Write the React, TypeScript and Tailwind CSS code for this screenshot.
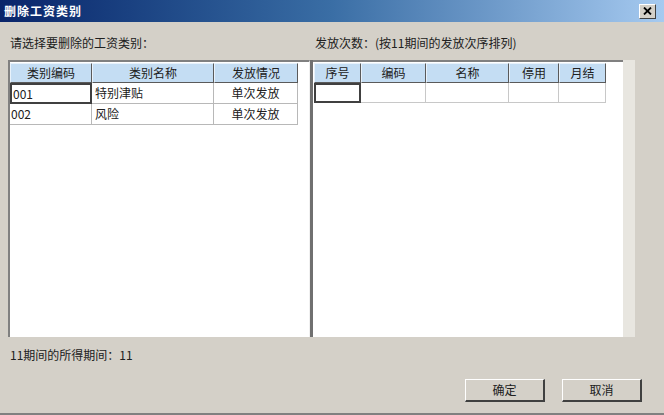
import React from 'react';

const font = { fontFamily: '"Noto Sans CJK SC", "Noto Sans", sans-serif' };

const leftCols = [
  { title: '类别编码', w: 'w-[82px]' },
  { title: '类别名称', w: 'w-[122px]' },
  { title: '发放情况', w: 'w-[84px]' },
];

const leftRows = [
  ['001', '特别津贴', '单次发放'],
  ['002', '风险', '单次发放'],
];

const rightCols = [
  { title: '序号', w: 'w-[47px]' },
  { title: '编码', w: 'w-[65px]' },
  { title: '名称', w: 'w-[83px]' },
  { title: '停用', w: 'w-[50px]' },
  { title: '月结', w: 'w-[47px]' },
];

const HeaderCell: React.FC<{ title: string; w: string }> = ({ title, w }) => (
  <div
    className={`${w} h-[20px] shrink-0 flex items-center justify-center bg-[#c4ddf3] border border-[#5a5a5a] border-l-[#e8f2fb] border-t-[#e8f2fb] text-[12px] text-[#202020]`}
  >
    {title}
  </div>
);

const App: React.FC = () => {
  return (
    <div className="w-[664px] h-[415px] bg-[#d4d0c8] flex flex-col overflow-hidden select-none" style={font}>
      {/* title bar */}
      <div className="h-[22px] shrink-0 flex items-center justify-between pl-[4px] pr-[8px] bg-gradient-to-r from-[#0a246a] via-[#3a6ea5] to-[#a6caf0]">
        <span className="text-white font-bold text-[12px] tracking-[1px]">删除工资类别</span>
        <div className="w-[17px] h-[15px] bg-[#d4d0c8] border border-[#ffffff] border-r-[#404040] border-b-[#404040] flex items-center justify-center">
          <svg width="9" height="8" viewBox="0 0 9 8">
            <path d="M1 0.5 L8 7.5 M8 0.5 L1 7.5" stroke="#000" strokeWidth="1.8" />
          </svg>
        </div>
      </div>

      <div className="flex-1 flex flex-col px-[8px]">
        {/* labels */}
        <div className="h-[38px] flex items-end pb-[8px] text-[12px] text-[#202020]">
          <div className="w-[307px] pl-[2px]">请选择要删除的工资类别：</div>
          <div>发放次数：(按11期间的发放次序排列)</div>
        </div>

        {/* panels */}
        <div className="h-[277px] flex">
          <div className="w-[302px] bg-white border-l-2 border-t-2 border-[#808080] border-r border-r-[#f0f0f0] pt-[1px]">
            <div className="flex">
              {leftCols.map((c) => (
                <HeaderCell key={c.title} {...c} />
              ))}
            </div>
            {leftRows.map((r, i) => (
              <div key={r[0]} className="flex h-[21px] text-[12px] text-[#202020]">
                <div
                  className={`w-[82px] flex items-center pl-[1px] ${
                    i === 0 ? 'border-2 border-[#404040]' : 'border-r border-b border-[#b8b8b8]'
                  }`}
                >
                  {r[0]}
                </div>
                <div className="w-[122px] flex items-center pl-[3px] border-r border-b border-[#b8b8b8]">{r[1]}</div>
                <div className="w-[84px] flex items-center justify-center border-r border-b border-[#b8b8b8]">{r[2]}</div>
              </div>
            ))}
          </div>

          <div className="w-[3px] bg-[#707070]" />

          <div className="w-[310px] bg-white border-t-2 border-[#808080] pt-[1px] pl-[1px]">
            <div className="flex">
              {rightCols.map((c) => (
                <HeaderCell key={c.title} {...c} />
              ))}
            </div>
            <div className="flex h-[20px]">
              {rightCols.map((c, i) => (
                <div
                  key={c.title}
                  className={`${c.w} ${i === 0 ? 'border-2 border-[#404040]' : 'border-r border-b border-[#c8c8c8]'}`}
                />
              ))}
            </div>
          </div>

          <div className="w-[12px] bg-[#e8e6e0]" />
        </div>

        {/* status */}
        <div className="h-[36px] flex items-center pl-[2px] text-[12px] text-[#202020]">11期间的所得期间：11</div>

        {/* buttons */}
        <div className="flex justify-end gap-[17px] pr-[14px] pt-[6px]">
          {['确定', '取消'].map((t) => (
            <button
              key={t}
              className="w-[80px] h-[23px] bg-[#d4d0c8] border border-[#ffffff] border-r-2 border-b-2 border-r-[#404040] border-b-[#404040] text-[12px] text-[#202020] flex items-center justify-center"
            >
              {t}
            </button>
          ))}
        </div>
      </div>
      <div className="h-[2px] bg-[#808080]" />
    </div>
  );
};

export default App;
